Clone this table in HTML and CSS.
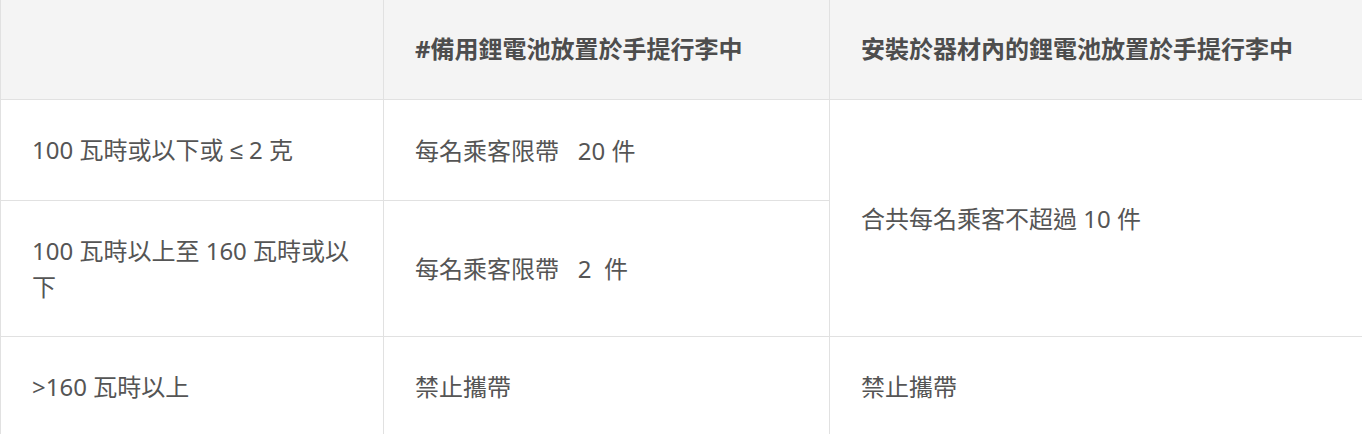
FILE: index.html
```html
<!DOCTYPE html>
<html lang="zh-Hant">
<head>
<meta charset="utf-8">
<title>鋰電池</title>
<link rel="stylesheet" href="styles.css">
</head>
<body>
<table class="rules">
  <colgroup>
    <col class="c1">
    <col class="c2">
    <col class="c3">
  </colgroup>
  <thead>
    <tr>
      <th></th>
      <th>#備用鋰電池放置於手提行李中</th>
      <th>安裝於器材內的鋰電池放置於手提行李中</th>
    </tr>
  </thead>
  <tbody>
    <tr class="r1">
      <td>100 瓦時或以下或 <span class="sym">≤</span> 2 克</td>
      <td>每名乘客限帶&nbsp;&nbsp; 20 件</td>
      <td rowspan="2">合共每名乘客不超過 10 件</td>
    </tr>
    <tr class="r2">
      <td>100 瓦時以上至 160 瓦時或以下</td>
      <td>每名乘客限帶&nbsp;&nbsp; 2&nbsp; 件</td>
    </tr>
    <tr class="r3">
      <td>&gt;160 瓦時以上</td>
      <td>禁止攜帶</td>
      <td>禁止攜帶</td>
    </tr>
  </tbody>
</table>
</body>
</html>
```
FILE: styles.css
```css
html, body {
  margin: 0;
  padding: 0;
  background: #ffffff;
}
.rules {
  border-collapse: collapse;
  table-layout: fixed;
  width: 1363px;
  font-family: "Noto Sans", "Noto Sans CJK TC", sans-serif;
  font-size: 24px;
  line-height: 36px;
  color: #555555;
}
.c1 { width: 383px; }
.c2 { width: 446px; }
.c3 { width: 534px; }
.rules th,
.rules td {
  border: 1px solid #e1e1e1;
  padding: 32px 31px 31px;
  text-align: left;
  vertical-align: middle;
}
.rules thead th {
  background: #f4f4f4;
  font-weight: bold;
  color: #4d4d4d;
  border-top: none;
  padding-top: 31px;
  padding-bottom: 32px;
}
.rules tbody td {
  font-weight: normal;
}
.sym {
  font-family: "Liberation Sans", sans-serif;
}
```
